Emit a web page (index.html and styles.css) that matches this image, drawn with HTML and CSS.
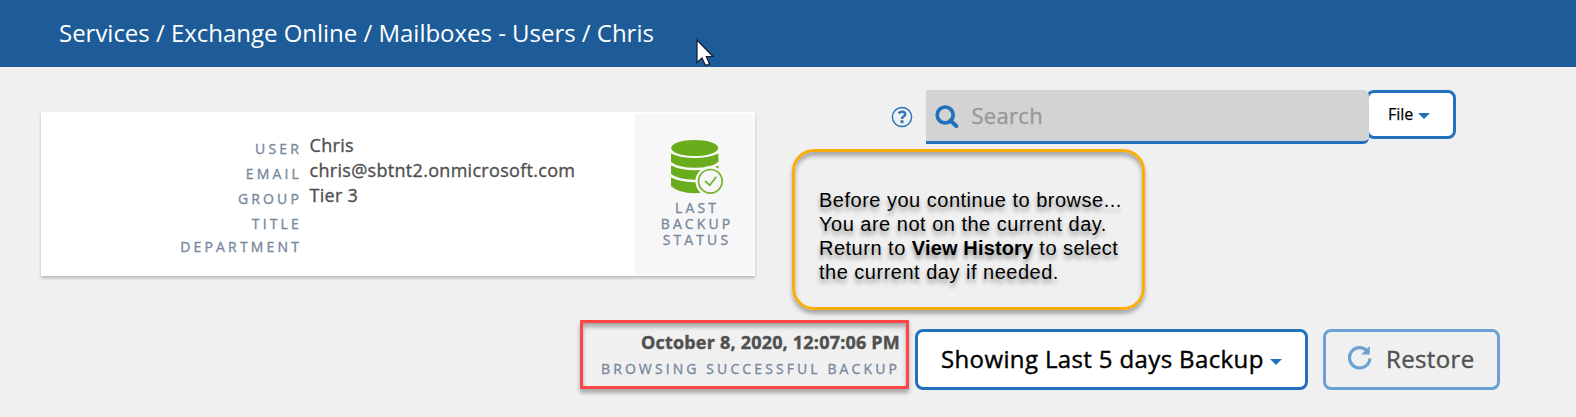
FILE: index.html
```html
<!DOCTYPE html>
<html lang="en">
<head>
<meta charset="utf-8">
<title>Mailboxes - Chris</title>
<link rel="stylesheet" href="styles.css">
</head>
<body>
<header class="topbar"><nav class="crumbs">Services / Exchange Online / Mailboxes - Users / Chris</nav></header>
<main>
  <div class="upper">
    <section class="card">
      <dl class="details">
        <dt>USER</dt><dd>Chris</dd>
        <dt>EMAIL</dt><dd class="email">chris@sbtnt2.onmicrosoft.com</dd>
        <dt>GROUP</dt><dd>Tier 3</dd>
        <dt>TITLE</dt><dd></dd>
        <dt>DEPARTMENT</dt><dd></dd>
      </dl>
      <div class="status">
        <svg class="db" width="54" height="54" viewBox="0 0 54 54">
          <g fill="#6aad1c">
            <ellipse cx="23.700" cy="8" rx="23.600" ry="8"/>
            <path d="M0 13.500Q10 18 23.700 18T47.400 13.500V22Q40 27.800 23.700 27.800T0 22Z"/>
            <path d="M0 25.500Q10 30.300 23.700 30.300T47.400 25.500V34Q40 39.700 23.700 39.700T0 34Z"/>
            <path d="M0 37.500Q10 42.300 23.700 42.300T47.400 37.500V45Q40 53.300 23.700 53.300T0 46Z"/>
          </g>
          <circle cx="39.400" cy="41.300" r="15" fill="#f7f7f7"/>
          <circle cx="39.400" cy="41.300" r="11.800" fill="none" stroke="#74b42c" stroke-width="1.700"/>
          <path d="M34 41l4.800 4.300 6.500-8.500" fill="none" stroke="#74b42c" stroke-width="1.800"/>
        </svg>
        <div class="status-label">LAST<br>BACKUP<br>STATUS</div>
      </div>
    </section>
    <div class="search-row">
      <svg class="help" width="22" height="22" viewBox="0 0 22 22" fill="none" stroke="#2f75b9">
        <circle cx="11" cy="11" r="9.600" stroke-width="1.500"/>
        <path d="M7.600 7.300Q9 5.800 11.100 5.800Q14.200 5.800 14.200 8.300Q14.200 9.700 12.300 10.700Q11 11.400 11 13" stroke-width="2.500"/>
        <path d="M9.500 15.700h3" stroke-width="2.800"/>
      </svg>
      <div class="search">
        <svg width="24" height="24" viewBox="0 0 24 24" fill="none" stroke="#2171bd">
          <circle cx="10.200" cy="10" r="8" stroke-width="3.700"/>
          <path d="M15.500 15.500l5.800 5.500" stroke-width="4" stroke-linecap="round"/>
        </svg>
        <span class="placeholder">Search</span>
      </div>
      <div class="file"><span>File</span><i class="caret"></i></div>
    </div>
  </div>
  <div class="lower">
    <div class="backup">
      <div class="date">October 8, 2020, 12:07:06 PM</div>
      <div class="state">BROWSING SUCCESSFUL BACKUP</div>
    </div>
    <div class="range"><span>Showing Last 5 days Backup</span><i class="caret"></i></div>
    <div class="restore">
      <svg width="24" height="24" viewBox="0 0 24 24">
        <path d="M19.200 4.800A10.200 10.200 0 1 0 21.900 12.500" fill="none" stroke="#6ba1d3" stroke-width="3.200"/>
        <path d="M21.800 0V8.600H13.200Z" fill="#6ba1d3"/>
      </svg>
      <span>Restore</span>
    </div>
  </div>
</main>
<aside class="callout">Before you continue to browse...<br>You are not on the current day.<br>Return to <b>View History</b> to select<br>the current day if needed.</aside>
<svg class="cursor" width="19" height="28" viewBox="0 0 19 28"><path d="M1 1V23.500L6 19l3.500 7.500 4-1.800L10.300 17.500H17Z" fill="#fff" stroke="#111c30" stroke-width="1.200"/></svg>
</body>
</html>
```
FILE: styles.css
```css
* { box-sizing: border-box; }
body {
  margin: 0;
  height: 417px;
  overflow: hidden;
  background: #f0f0f0;
  font-family: "Open Sans", "Noto Sans", sans-serif;
  color: #505050;
}
.topbar {
  height: 67px;
  padding: 0 59px;
  background: #1d5c98;
  color: #fff;
  font-size: 24px;
  line-height: 65px;
  letter-spacing: -.02px;
}
.crumbs { white-space: nowrap; }
.upper {
  display: flex;
  height: 253px;
  padding: 23px 0 0 41px;
}
.card {
  display: flex;
  justify-content: space-between;
  width: 714px;
  height: 164px;
  margin-top: 22px;
  padding: 2px 1px 1px 0;
  background: #fff;
  box-shadow: 0 2px 3px rgba(0, 0, 0, .24);
}
.details {
  display: grid;
  grid-template-columns: 261px 300px;
  grid-template-rows: repeat(4, 25px) 22px;
  column-gap: 7.5px;
  margin: 19px 0 0;
  line-height: 25px;
}
.details dt {
  padding-top: 4px;
  text-align: right;
  font-size: 14px;
  letter-spacing: 3.15px;
  line-height: 24px;
  color: #77889d;
  -webkit-text-stroke: .35px;
}
.details dt:last-of-type { line-height: 20px; }
.details dd {
  margin: 0;
  font-size: 18px;
  letter-spacing: .3px;
  white-space: nowrap;
  -webkit-text-stroke: .35px;
}
.status {
  display: flex;
  flex-direction: column;
  align-items: center;
  width: 119px;
  padding-top: 26px;
  background: #f7f7f7;
}
.db { margin-left: 6px; }
.status-label {
  margin-top: 6px;
  padding-left: 5px;
  text-align: center;
  font-size: 14px;
  line-height: 16px;
  letter-spacing: 3.1px;
  color: #77889d;
  -webkit-text-stroke: .35px;
}
.search-row { display: flex; align-items: flex-start; margin-left: 136px; }
.help { margin: 16px 13px 0 0; }
.search {
  display: flex;
  z-index: 1;
  width: 443px;
  height: 54px;
  padding: 15px 0 0 9px;
  background: #d3d3d3;
  border-bottom: 3px solid #2171bd;
  border-radius: 0 6px 6px 0;
}
.placeholder {
  margin-left: 12.5px;
  margin-top: -5px;
  font-size: 22px;
  line-height: 30px;
  letter-spacing: .3px;
  color: #999;
  -webkit-text-stroke: .4px;
}
.file {
  display: flex;
  align-items: center;
  width: 90px;
  height: 49px;
  margin-left: -3px;
  padding: 0 0 2px 19px;
  background: #fff;
  border: 3px solid #2171bd;
  border-radius: 8px;
  color: #000;
  font-size: 16px;
  -webkit-text-stroke: .25px;
}
.caret {
  margin: 5px 0 0 5px;
  border: 6px solid transparent;
  border-top-color: #2171bd;
  border-bottom: 0;
}
.lower { display: flex; align-items: flex-start; padding-left: 580px; }
.backup {
  width: 329px;
  height: 69px;
  padding: 6px 6px 0 0;
  border: 3px solid #ff4545;
  box-shadow: 0 4px 4px rgba(0, 0, 0, .3), inset 0 4px 4px rgba(0, 0, 0, .3);
  text-align: right;
  white-space: nowrap;
}
.date { font-size: 18px; font-weight: 700; line-height: 26px; letter-spacing: .2px; -webkit-text-stroke: .4px; }
.state {
  font-size: 14px;
  line-height: 27px;
  letter-spacing: 3.1px;
  color: #77889d;
  -webkit-text-stroke: .35px;
}
.range, .restore {
  display: flex;
  align-items: center;
  height: 61px;
  margin-top: 9px;
  border: 3px solid #2171bd;
  border-radius: 8px;
  padding-bottom: 2px;
  font-size: 24px;
  white-space: nowrap;
  -webkit-text-stroke: .4px;
}
.range { width: 393px; margin-left: 6px; padding-left: 23px; background: #fff; color: #000; letter-spacing: .37px; }
.range .caret { margin: 6px 0 0 6px; }
.restore { width: 177px; margin-left: 15px; padding-left: 22px; border-color: #6ba1d3; letter-spacing: .35px; }
.restore svg { margin-top: -2px; }
.restore span { margin-left: 14px; }
.callout {
  position: absolute;
  left: 792px;
  top: 149px;
  width: 353px;
  height: 161px;
  padding: 36px 0 0 24px;
  border: 3px solid #fbad08;
  border-radius: 22px;
  box-shadow: 0 4px 4px rgba(0, 0, 0, .3), inset 0 4px 4px rgba(0, 0, 0, .3);
  color: #000;
  font: 20px/24px "Liberation Sans", Arial, sans-serif;
  letter-spacing: .5px;
  text-shadow: 0 4px 4px rgba(0, 0, 0, .4);
  white-space: nowrap;
}
.callout b { letter-spacing: .15px; }
.cursor { position: absolute; left: 696px; top: 39px; }
```
